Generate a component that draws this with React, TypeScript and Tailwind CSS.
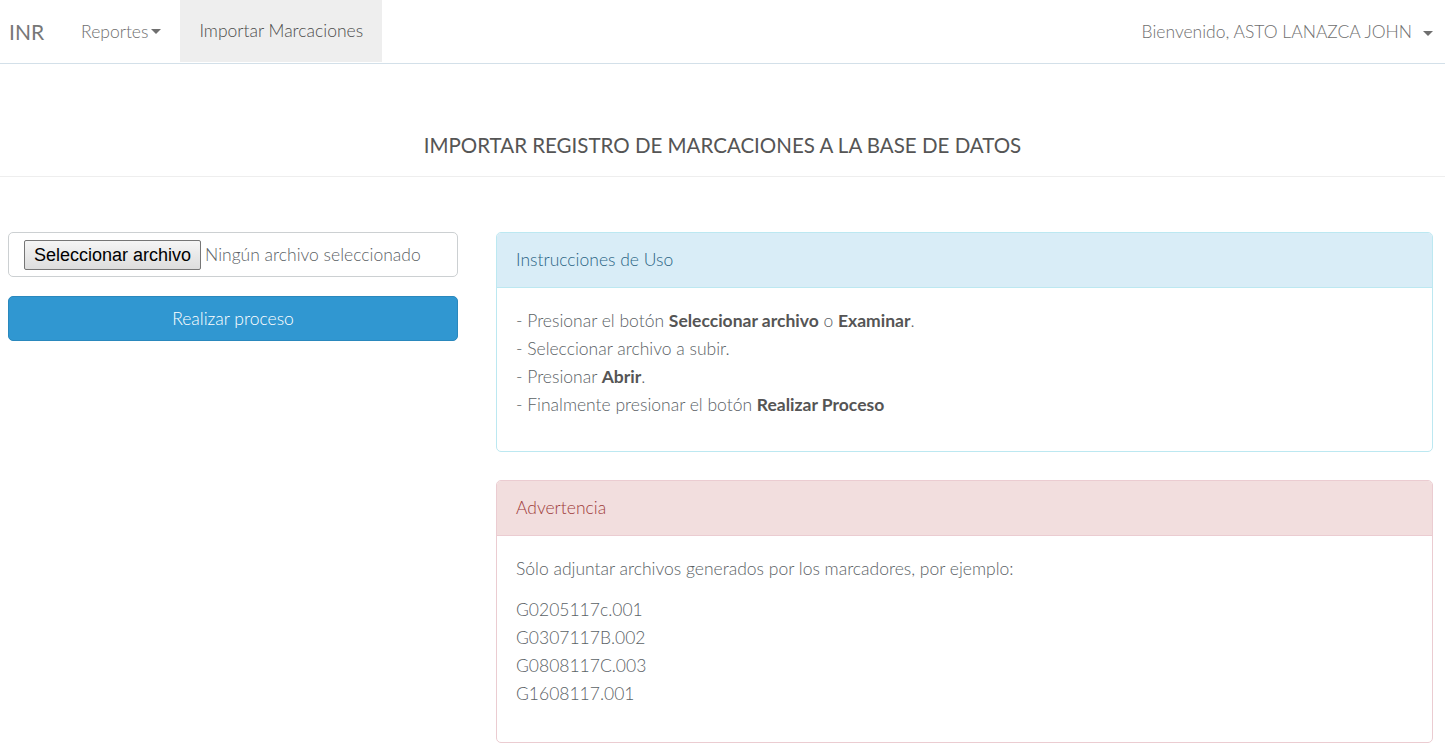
import React from "react";

function Caret() {
  return (
    <span className="inline-block ml-[3px] align-middle w-0 h-0 border-t-[5px] border-t-current border-x-[5px] border-x-transparent" />
  );
}

export default function App() {
  return (
    <div className="min-h-screen bg-white text-[#5b6266] font-['Lato','Liberation_Sans',sans-serif] font-light text-[17.5px] leading-[28px]">
      <nav className="h-[64px] border-b border-[#d3e0e9] flex items-stretch">
        <div className="flex items-center pl-[9px] pr-[18px] text-[21px] text-[#777] font-normal">INR</div>
        <div className="flex items-center px-[19px] text-[#6f6f6f]">
          Reportes
          <Caret />
        </div>
        <div className="flex items-center px-[19px] h-[62px] bg-[#eeeeee] text-[#4d4d4d]">Importar Marcaciones</div>
        <div className="flex-1" />
        <div className="flex items-center pr-[12px] text-[#6f6f6f]">
          Bienvenido, ASTO LANAZCA JOHN
          <span className="ml-[8px]"><Caret /></span>
        </div>
      </nav>

      <div className="border-b border-[#eeeeee] pt-[67px] pb-[17px] text-center text-[20.5px] leading-[28px] text-[#555] font-normal">
        IMPORTAR REGISTRO DE MARCACIONES A LA BASE DE DATOS
      </div>

      <div className="flex pt-[55px]">
        <div className="w-[450px] ml-[8px] flex flex-col gap-[19px]">
          <div className="h-[45px] border border-[#ccd0d2] rounded-[5px] flex items-center pl-[15px] gap-[4px]">
            <div className="h-[30px] px-[9px] flex items-center border border-[#767676] rounded-[2px] bg-gradient-to-b from-[#f5f5f5] to-[#dddddd] text-black text-[18px] font-normal font-['Liberation_Sans',Arial,sans-serif]">
              Seleccionar archivo
            </div>
            <span>Ningún archivo seleccionado</span>
          </div>
          <div className="h-[45px] rounded-[5px] bg-[#3097d1] border border-[#2a88bd] text-white flex items-center justify-center">
            Realizar proceso
          </div>
        </div>

        <div className="ml-[38px] mr-[12px] flex-1 flex flex-col gap-[28px]">
          <div className="border border-[#bce8f1] rounded-[5px] overflow-hidden">
            <div className="h-[55px] bg-[#d9edf7] border-b border-[#bce8f1] text-[#2b6585] flex items-center px-[19px]">
              Instrucciones de Uso
            </div>
            <div className="px-[19px] pt-[19px] pb-[32px]">
              <div>- Presionar el botón <b className="text-[#555] font-bold">Seleccionar archivo</b> o <b className="text-[#555] font-bold">Examinar</b>.</div>
              <div>- Seleccionar archivo a subir.</div>
              <div>- Presionar <b className="text-[#555] font-bold">Abrir</b>.</div>
              <div>- Finalmente presionar el botón <b className="text-[#555] font-bold">Realizar Proceso</b></div>
            </div>
          </div>

          <div className="border border-[#ebccd1] rounded-[5px] overflow-hidden">
            <div className="h-[55px] bg-[#f2dede] border-b border-[#ebccd1] text-[#a03c3b] flex items-center px-[19px]">
              Advertencia
            </div>
            <div className="px-[19px] pt-[19px] pb-[34px]">
              <p className="mb-[13px]">Sólo adjuntar archivos generados por los marcadores, por ejemplo:</p>
              <div>G0205117c.001</div>
              <div>G0307117B.002</div>
              <div>G0808117C.003</div>
              <div>G1608117.001</div>
            </div>
          </div>
        </div>
      </div>
    </div>
  );
}
